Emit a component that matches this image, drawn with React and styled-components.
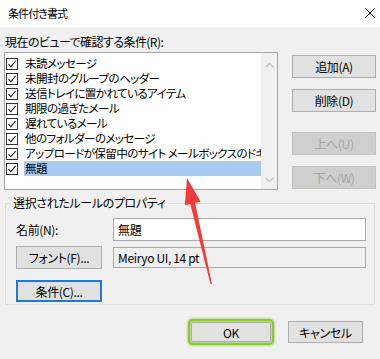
import React from 'react';
import styled, { createGlobalStyle } from 'styled-components';

const GlobalStyle = createGlobalStyle`
  html, body {
    margin: 0;
    padding: 0;
    background: #f0f0f0;
  }
  body {
    font-family: "Noto Sans CJK JP", "Noto Sans", sans-serif;
  }
`;

const Dialog = styled.div`
  position: relative;
  width: 380px;
  height: 359px;
  overflow: hidden;
  background: #f0f0f0;
  color: #000;
  font-size: 12px;
  letter-spacing: -0.35px;
  font-feature-settings: "palt";
  display: flex;
  flex-direction: column;
`;

const TitleBar = styled.div`
  height: 27px;
  flex: none;
  box-sizing: border-box;
  background: #fff;
  display: flex;
  align-items: center;
  justify-content: space-between;
  padding: 0 5px 1px 8px;
  font-size: 11px;
  letter-spacing: -0.9px;
`;

const Body = styled.div`
  display: flex;
  flex-direction: column;
  padding: 7px 4px 0 4px;
`;

const TopSection = styled.div`
  display: grid;
  grid-template-columns: 274px 84px;
  column-gap: 14px;
`;

const SectionLabel = styled.div`
  grid-column: 1 / -1;
  line-height: 16px;
  padding-left: 1px;
  margin-bottom: 2px;
  letter-spacing: -0.55px;
`;

/* list of rules with the fake scrollbar */
const RuleList = styled.div`
  height: 138px;
  box-sizing: border-box;
  border: 1px solid #a5a5a5;
  background: #fff;
  display: flex;
`;

const RuleItems = styled.div`
  flex: 1;
  min-width: 0;
  overflow: hidden;
  padding-top: 3px;
  display: flex;
  flex-direction: column;
`;

const RuleRow = styled.div`
  height: 15px;
  display: flex;
  align-items: center;
  padding-left: 1px;
`;

const CheckBox = styled.svg`
  flex: none;
  width: 12px;
  height: 12px;
`;

const RuleName = styled.span`
  flex: 1;
  min-width: 0;
  margin-left: 6px;
  padding-left: 1px;
  font-size: 11.6px;
  line-height: 15px;
  letter-spacing: -0.65px;
  white-space: nowrap;
  overflow: hidden;
  background: ${(p) => (p.$selected ? '#a6cdf0' : 'transparent')};
`;

const ScrollBar = styled.div`
  flex: none;
  width: 16px;
  background: #f0f0f0;
  display: flex;
  flex-direction: column;
  align-items: center;
  justify-content: space-between;
  padding: 9px 0 6px;
  box-sizing: border-box;
`;

const ButtonStack = styled.div`
  display: flex;
  flex-direction: column;
  gap: 11px;
  padding-top: 3px;
`;

const Button = styled.button`
  box-sizing: border-box;
  width: ${(p) => p.$w || 84}px;
  height: ${(p) => p.$h || 23}px;
  margin: 0;
  margin-top: ${(p) => p.$push || 0}px;
  padding: 0;
  font: inherit;
  letter-spacing: -0.35px;
  font-feature-settings: "palt";
  background: #e1e1e1;
  border: 1px solid #adadad;
  color: #000;
  &:disabled {
    background: #cfcfcf;
    border-color: #c2c2c2;
    color: #a3a3a3;
  }
`;

const FocusButton = styled(Button)`
  border: 2px solid #2178d0;
`;

const OkButton = styled(Button)`
  border-radius: 2px;
  box-shadow: 0 0 0 1px #b7dc8c, 0 0 0 3px #8cc63f, 0 0 2px 4px rgba(140, 198, 63, 0.55);
`;

/* group box */
const GroupBox = styled.fieldset`
  margin: 6px 1px 0;
  padding: 0 8px 8px 10px;
  border: 1px solid #dcdcdc;
  min-width: 0;
`;

const GroupLegend = styled.legend`
  margin-left: -5px;
  padding: 0 2px;
  line-height: 14px;
`;

const PropGrid = styled.div`
  display: grid;
  grid-template-columns: 86px 1fr;
  grid-template-rows: 23px 23px 22px;
  column-gap: 11px;
  row-gap: 5px;
  align-items: center;
  padding-top: 8px;
`;

const FieldLabel = styled.span`
  padding-left: 0;
`;

const Field = styled.div`
  box-sizing: border-box;
  height: ${(p) => (p.$readOnly ? 21 : 23)}px;
  border: 1px solid #a9a9a9;
  background: ${(p) => (p.$readOnly ? '#f0f0f0' : '#fff')};
  display: flex;
  align-items: center;
  padding-left: 4px;
`;

const LastRow = styled.div`
  grid-column: 1 / -1;
  margin-top: 12px;
`;

const Footer = styled.div`
  display: flex;
  justify-content: flex-end;
  align-items: center;
  gap: 17px;
  padding: 16px 13px 0 0;
`;

const Annotation = styled.svg`
  position: absolute;
  left: 0;
  top: 0;
  width: 380px;
  height: 359px;
  pointer-events: none;
`;

const rules = [
  '未読メッセージ',
  '未開封のグループのヘッダー',
  '送信トレイに置かれているアイテム',
  '期限の過ぎたメール',
  '遅れているメール',
  '他のフォルダーのメッセージ',
  'アップロードが保留中のサイト メールボックスのドキュメント',
  '無題',
];

function Check() {
  return (
    <CheckBox viewBox="0 0 12 12">
      <rect x="0.5" y="0.5" width="11" height="11" fill="#fff" stroke="#333" />
      <path d="M2.4 6.2 L4.8 8.6 L9.6 3.2" fill="none" stroke="#222" strokeWidth="1.1" />
    </CheckBox>
  );
}

function Chevron({up}) {
  return (
    <svg width="9" height="6" viewBox="0 0 9 6">
      <path d={up ? 'M1 5 L4.5 1.5 L8 5' : 'M1 1 L4.5 4.5 L8 1'} fill="none" stroke="#bdbdbd" strokeWidth="1.1" />
    </svg>
  );
}

export default function App() {
  return (
    <>
      <GlobalStyle />
      <Dialog>
        <TitleBar>
          <span>条件付き書式</span>
          <svg width="10" height="10" viewBox="0 0 10 10">
            <path d="M0.5 0.5 L9.5 9.5 M9.5 0.5 L0.5 9.5" stroke="#000" strokeWidth="1" />
          </svg>
        </TitleBar>

        <Body>
          <TopSection>
            <SectionLabel>現在のビューで確認する条件(R):</SectionLabel>
            <RuleList>
              <RuleItems>
                {rules.map((r, i) => (
                  <RuleRow key={r}>
                    <Check />
                    <RuleName $selected={i === rules.length - 1}>{r}</RuleName>
                  </RuleRow>
                ))}
              </RuleItems>
              <ScrollBar>
                <Chevron up />
                <Chevron />
              </ScrollBar>
            </RuleList>
            <ButtonStack>
              <Button>追加(A)</Button>
              <Button>削除(D)</Button>
              <Button disabled $push={9}>上へ(U)</Button>
              <Button disabled>下へ(W)</Button>
            </ButtonStack>
          </TopSection>

          <GroupBox>
            <GroupLegend>選択されたルールのプロパティ</GroupLegend>
            <PropGrid>
              <FieldLabel>名前(N):</FieldLabel>
              <Field>無題</Field>
              <Button $w={86}>フォント(F)...</Button>
              <Field $readOnly>Meiryo UI, 14 pt</Field>
              <LastRow>
                <FocusButton $w={86} $h={22}>条件(C)...</FocusButton>
              </LastRow>
            </PropGrid>
          </GroupBox>

          <Footer>
            <OkButton $w={80} $h={20}>OK</OkButton>
            <Button $w={75} $h={22}>キャンセル</Button>
          </Footer>
        </Body>

        <Annotation viewBox="0 0 380 359">
          <polygon
            points="187,178 200.5,201.6 195.1,202.9 212,284 210.5,284.1 190.3,204 184.9,205.2"
            fill="#f23a3a"
          />
        </Annotation>
      </Dialog>
    </>
  );
}
